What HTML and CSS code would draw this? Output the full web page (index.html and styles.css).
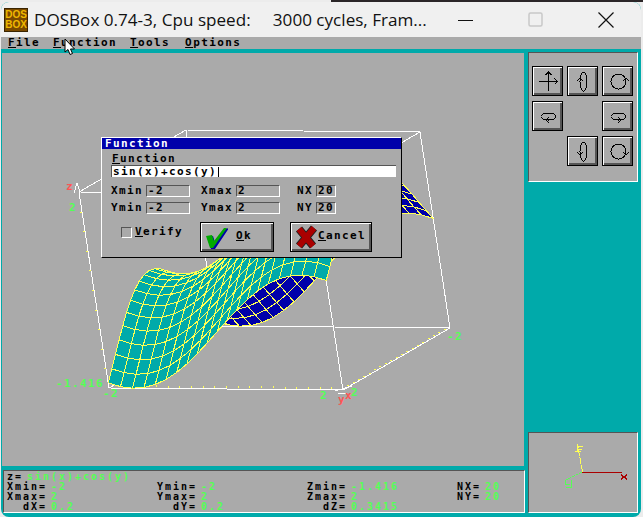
FILE: index.html
```html
<!DOCTYPE html>
<html>
<head>
    <title>DOSBox 0.74-3</title>
    <link rel="stylesheet" href="styles.css">
</head>
<body>
    <div class="window">
        <div class="titlebar">
            <div class="app-icon">DOS<br>BOX</div>
            <div class="title-text">DOSBox 0.74-3, Cpu speed:     3000 cycles, Fram...</div>
            <div class="win-controls">
                <svg class="win-btn" width="16" height="16" viewBox="0 0 16 16"><path d="M0 8.5H15" stroke="#111" fill="none"/></svg>
                <svg class="win-btn" width="16" height="16" viewBox="0 0 16 16"><rect x="1" y="1" width="13" height="13" rx="1.5" stroke="#c8c8c8" stroke-width="1.5" fill="none"/></svg>
                <svg class="win-btn" width="16" height="16" viewBox="0 0 16 16"><path d="M0.5 0.5L15.5 15.5M15.5 0.5L0.5 15.5" stroke="#111" stroke-width="1.2" fill="none"/></svg>
            </div>
        </div>
        <div class="menu">
            <span><u>F</u>ile</span>
            <span><u>F</u>unction</span>
            <span><u>T</u>ools</span>
            <span><u>O</u>ptions</span>
        </div>
        <div class="desktop">
            <div class="left-col">
                <div class="plot">
                    <svg id="plot-svg" class="plot-svg" width="522" height="413" viewBox="2 53 522 413">
                        <g id="plot-box"></g>
                        <g id="plot-surface"></g>
                        <g class="axis-label">
                            <text class="red" x="66" y="190">z</text>
                            <text class="green" x="69" y="211">2</text>
                            <text class="green" x="56" y="387">-1.416</text>
                            <text class="green" x="103" y="397">-2</text>
                            <text class="green" x="320" y="399">2</text>
                            <text class="green" x="351" y="396">2</text>
                            <text class="red" x="338" y="403">y</text>
                            <text class="red" x="345" y="399">x</text>
                            <text class="green" x="447" y="340">-2</text>
                        </g>
                    </svg>
                    <div class="dialog">
                        <div class="dialog-title">Function</div>
                        <div class="dialog-body">
                            <div class="fn-label"><u>F</u>unction</div>
                            <div class="fn-input">sin(x)+cos(y)<span class="caret"></span></div>
                            <div class="range-grid">
                                <span>Xmin</span><span class="field">-2</span><i></i>
                                <span>Xmax</span><span class="field">2</span><i></i>
                                <span>NX</span><span class="field">20</span>
                                <span>Ymin</span><span class="field">-2</span><i></i>
                                <span>Ymax</span><span class="field">2</span><i></i>
                                <span>NY</span><span class="field">20</span>
                            </div>
                            <div class="dialog-actions">
                                <div class="verify"><span class="checkbox"></span><span><u>V</u>erify</span></div>
                                <div class="dlg-btn ok-btn">
                                    <svg width="24" height="24" viewBox="0 0 24 24">
                                        <polygon points="3,12 9,11 11,17 21,4 25,3 11,24 7,24" fill="#0000aa"/>
                                        <polygon points="2,11 8,10 10,16 20,3 23,3 9,23 6,23" fill="#00aa00"/>
                                    </svg>
                                    <span class="btn-label"><u>O</u>k</span>
                                </div>
                                <div class="dlg-btn cancel-btn">
                                    <svg width="24" height="24" viewBox="0 0 24 24">
                                        <path d="M5 4L19 21M20 3L5 21" stroke="#222" stroke-width="8" fill="none"/>
                                        <path d="M5 4L19 21M20 3L5 21" stroke="#aa0000" stroke-width="6" fill="none"/>
                                    </svg>
                                    <span class="btn-label"><u>C</u>ancel</span>
                                </div>
                            </div>
                        </div>
                    </div>
                </div>
                <div class="status">
                    <div class="status-row"><span>z=</span><b>sin(x)+cos(y)</b></div>
                    <div class="status-grid">
                        <div>Xmin=<b>-2</b></div><div>Ymin=<b>-2</b></div><div>Zmin=<b>-1.416</b></div><div>NX=<b>20</b></div>
                        <div>Xmax=<b>2</b></div><div>Ymax=<b>2</b></div><div>Zmax=<b>2</b></div><div>NY=<b>20</b></div>
                        <div>  dX=<b>0.2</b></div><div>  dY=<b>0.2</b></div><div>  dZ=<b>0.3415</b></div><div></div>
                    </div>
                </div>
            </div>
            <div class="right-col">
                <div class="toolbar">
                    <div class="tool-btn"><svg width="24" height="24" viewBox="0 0 24 24"><path d="M2.5 12.5H21.5M18.5 9.5L21.5 12.5L18.5 15.5M12.5 3V22M9.5 6L12.5 3L15.5 6"/></svg></div>
                    <div class="tool-btn"><svg width="24" height="24" viewBox="0 0 24 24"><ellipse cx="12.5" cy="12.5" rx="3.5" ry="9.5"/><path d="M6 12L9 9L12 12"/></svg></div>
                    <div class="tool-btn"><svg width="24" height="24" viewBox="0 0 24 24"><circle cx="12.5" cy="12.5" r="7.5"/><path d="M17 12L20 9L23 12"/></svg></div>
                    <div class="tool-btn"><svg width="24" height="24" viewBox="0 0 24 24"><ellipse cx="12.5" cy="12.5" rx="7.5" ry="3.5"/><path d="M13 13L10 16L13 19"/></svg></div>
                    <div></div>
                    <div class="tool-btn"><svg width="24" height="24" viewBox="0 0 24 24"><ellipse cx="12.5" cy="12.5" rx="7.5" ry="3.5"/><path d="M12 13L15 16L12 19"/></svg></div>
                    <div></div>
                    <div class="tool-btn"><svg width="24" height="24" viewBox="0 0 24 24"><ellipse cx="12.5" cy="12.5" rx="3.5" ry="9.5"/><path d="M6 13L9 16L12 13"/></svg></div>
                    <div class="tool-btn"><svg width="24" height="24" viewBox="0 0 24 24"><circle cx="12.5" cy="12.5" r="7.5"/><path d="M17 13L20 16L23 13"/></svg></div>
                </div>
                <div class="viewer">
                    <svg class="viewer-svg" width="108" height="79" viewBox="529 433 108 79">
                        <path d="M582 472.5H622" stroke="#aa0000"/>
                        <path d="M582.5 472L578 447" stroke="#ffff55" stroke-dasharray="7 1"/>
                        <path d="M582 472L564 481" stroke="#55ff55" stroke-dasharray="3 1"/>
                        <path d="M621 475L627 479M627 475L621 479" stroke="#aa0000" stroke-width="1.5"/>
                        <path d="M577 444V452M577 446H583M577 449H582M575 451H581" stroke="#ffff55"/>
                        <path d="M565 480V484H570M571 480V487H566" stroke="#55ff55" fill="none"/>
                    </svg>
                </div>
            </div>
        </div>
    </div>
    <svg class="cursor" width="13" height="18" viewBox="0 0 13 18">
        <path d="M1 1V14L4 11.5L6 16.5L8.5 15.5L6.5 11H10.5Z" fill="#fff" stroke="#000"/>
    </svg>
    <script src="script.js"></script>
</body>
</html>
```

FILE: styles.css
```css
body {
    margin: 0;
    width: 643px;
    height: 517px;
    overflow: hidden;
    position: relative;
    background: linear-gradient(#2b2628, #2b2628) 331px 0 / 312px 2px no-repeat, #ececec;
    font-family: "DejaVu Sans Mono", "Liberation Mono", monospace;
    font-weight: bold;
    font-size: 11px;
    letter-spacing: 1.38px;
    color: #000;
}
u {
    text-underline-offset: 1px;
}
.window {
    margin: 2px 2px 0 1px;
    height: 515px;
    background: #00aaaa;
    border-radius: 8px 8px 8px 8px;
    overflow: hidden;
}
.titlebar {
    height: 35px;
    background: #f0f0f0;
    display: flex;
    align-items: center;
    font-family: "Open Sans", "Noto Sans", sans-serif;
    font-weight: normal;
    letter-spacing: 0;
}
.app-icon {
    width: 24px;
    height: 24px;
    margin-left: 3px;
    background: #7a4a00;
    color: #f0b800;
    font: bold 10px/10.5px "Liberation Sans", sans-serif;
    text-align: center;
    padding-top: 1px;
    box-sizing: border-box;
    border: 1px solid #3a2400;
}
.title-text {
    margin-left: 6px;
    font-size: 17.1px;
    white-space: pre;
    color: #111;
}
.win-controls {
    margin-left: auto;
    display: flex;
    gap: 54px;
    padding-right: 27px;
}
.win-btn {
    display: block;
}
.menu {
    height: 12px;
    background: #aaaaaa;
    display: flex;
    gap: 13px;
    padding-left: 7px;
    line-height: 12px;
}
.menu span:nth-child(4) {
    margin-left: 2px;
}
.desktop {
    display: flex;
    gap: 3px;
    padding: 3px 3px 0 1px;
}
.left-col {
    width: 523px;
}
.plot {
    width: 522px;
    height: 413px;
    margin-top: 1px;
    background: #aaaaaa;
    position: relative;
}
.plot-svg {
    display: block;
}
.axis-label text {
    font-family: "DejaVu Sans Mono", monospace;
    font-size: 11px;
}
.green {
    fill: #55ff55;
}
.red {
    fill: #ff5555;
}
.dialog {
    position: absolute;
    left: 99px;
    top: 84px;
    width: 301px;
    height: 121px;
    box-sizing: border-box;
    background: #aaaaaa;
    border: 1px solid #000;
    border-top-color: #fff;
    border-left-color: #fff;
}
.dialog-title {
    height: 11px;
    line-height: 11px;
    background: #0000aa;
    color: #fff;
    padding-left: 3px;
}
.dialog-body {
    padding: 5px 5px 0 9px;
}
.fn-label {
    height: 10px;
    line-height: 10px;
    margin-left: 1px;
}
.fn-input {
    height: 12px;
    line-height: 12px;
    background: #fff;
    box-sizing: border-box;
    border-top: 1px solid #555;
    border-left: 1px solid #555;
    padding-left: 1px;
    margin-top: 1px;
    white-space: pre;
    display: flex;
    align-items: center;
}
.caret {
    width: 1px;
    height: 10px;
    background: #000;
    margin-left: 1px;
}
.range-grid {
    display: grid;
    grid-template-columns: 35px 44px 11px 35px 44px 17px 19px 20px;
    grid-auto-rows: 12px;
    row-gap: 5px;
    margin-top: 8px;
    line-height: 12px;
}
.field {
    box-sizing: border-box;
    border: 1px solid #fff;
    border-top-color: #555;
    border-left-color: #555;
    line-height: 10px;
    padding-left: 1px;
}
.dialog-actions {
    display: flex;
    margin-top: 8px;
    margin-left: 10px;
}
.verify {
    display: flex;
    gap: 3px;
    width: 79px;
    height: 20px;
    padding-top: 5px;
    line-height: 10px;
}
.checkbox {
    width: 11px;
    height: 11px;
    box-sizing: border-box;
    border: 1px solid #fff;
    border-top-color: #555;
    border-left-color: #555;
}
.dlg-btn {
    height: 30px;
    box-sizing: border-box;
    border: 1px solid #000;
    box-shadow: inset 1px 1px 0 #fff, inset -2px -2px 0 #555;
    display: flex;
    align-items: center;
    padding-left: 3px;
}
.btn-label {
    padding-bottom: 3px;
}
.ok-btn {
    width: 74px;
    margin-right: 16px;
}
.cancel-btn {
    width: 82px;
}
.ok-btn .btn-label {
    margin-left: 8px;
}
.status {
    margin: 4px 0 0 1px;
    width: 522px;
    height: 43px;
    box-sizing: border-box;
    background: #aaaaaa;
    border: 1px solid #fff;
    border-top-color: #555;
    border-left-color: #555;
    padding: 1px 0 0 3px;
    font-size: 10px;
    letter-spacing: 1.98px;
    line-height: 10px;
}
.status b {
    color: #55ff55;
    margin-left: 4px;
}
.status-row {
    display: flex;
    height: 10px;
}
.status-grid {
    display: grid;
    grid-template-columns: repeat(4, 150px);
    grid-auto-rows: 10px;
    white-space: pre;
}
.right-col {
    width: 110px;
    display: flex;
    flex-direction: column;
    justify-content: space-between;
    height: 461px;
}
.toolbar {
    height: 130px;
    box-sizing: border-box;
    background: #aaaaaa;
    border: 1px solid #fff;
    border-top-color: #555;
    border-left-color: #555;
    padding: 13px 0 0 3px;
    display: grid;
    grid-template-columns: repeat(3, 31px);
    grid-auto-rows: 30px;
    column-gap: 4px;
    row-gap: 5px;
}
.tool-btn {
    box-sizing: border-box;
    border: 1px solid #000;
    box-shadow: inset 1px 1px 0 #fff, inset -2px -2px 0 #555;
    display: flex;
    align-items: center;
    justify-content: center;
}
.tool-btn svg {
    fill: none;
    stroke: #000;
    shape-rendering: crispEdges;
}
.viewer {
    height: 81px;
    box-sizing: border-box;
    background: #aaaaaa;
    border: 1px solid #fff;
    border-top-color: #555;
    border-left-color: #555;
}
.viewer-svg {
    display: block;
    shape-rendering: crispEdges;
}
.cursor {
    position: absolute;
    left: 64px;
    top: 38px;
}
```

FILE: script.js
```js
// z = sin(x) + cos(y) on [-2,2], same projection as the program draws
const NS = 'http://www.w3.org/2000/svg';
const N = 20;
const ZMIN = -1.416;
const ZMAX = 2;

function project(u, v, h) {
    return [
        109 + u * 234 + v * 107 - h * 30,
        388 + u * 2 - v * 62 - h * 196
    ];
}

function surfacePoint(i, j) {
    const x = -2 + 4 * i / N;
    const y = 2 - 4 * j / N;
    const z = Math.sin(x) + Math.cos(y);
    return project(i / N, j / N, (z - ZMIN) / (ZMAX - ZMIN));
}

function add(parent, name, attrs) {
    const el = document.createElementNS(NS, name);
    for (const key in attrs) {
        el.setAttribute(key, attrs[key]);
    }
    parent.appendChild(el);
    return el;
}

function line(parent, a, b, color) {
    add(parent, 'line', {
        x1: a[0], y1: a[1], x2: b[0], y2: b[1],
        stroke: color, 'shape-rendering': 'crispEdges'
    });
}

function drawBox() {
    const box = document.getElementById('plot-box');
    const c = (u, v, h) => project(u, v, h);
    const edges = [
        [c(0,0,0), c(1,0,0)], [c(1,0,0), c(1,1,0)], [c(1,1,0), c(0,1,0)], [c(0,1,0), c(0,0,0)],
        [c(0,0,1), c(1,0,1)], [c(1,0,1), c(1,1,1)], [c(1,1,1), c(0,1,1)], [c(0,1,1), c(0,0,1)],
        [c(0,0,0), c(0,0,1)], [c(1,0,0), c(1,0,1)], [c(1,1,0), c(1,1,1)], [c(0,1,0), c(0,1,1)]
    ];
    edges.forEach(e => line(box, e[0], e[1], '#ffffff'));

    // small arrow heads at the axis ends
    line(box, [77, 183], [74, 193], '#ffffff');
    line(box, [77, 183], [80, 192], '#ffffff');
    line(box, [335, 391], [352, 386], '#ffffff');
    line(box, [338, 393], [346, 393], '#ffffff');

    // yellow ticks, just off the white lines
    for (let i = 1; i < N; i++) {
        const p = c(i / N, 0, 0);
        add(box, 'rect', { x: Math.round(p[0]), y: Math.round(p[1]) - 3, width: 1, height: 2, fill: '#ffff55' });
        const q = c(1, i / N, 0);
        add(box, 'rect', { x: Math.round(q[0]) - 1, y: Math.round(q[1]) - 2, width: 2, height: 1, fill: '#ffff55' });
    }
    for (let i = 1; i < 10; i++) {
        const p = c(0, 0, i / 10);
        add(box, 'rect', { x: Math.round(p[0]) - 2, y: Math.round(p[1]), width: 2, height: 1, fill: '#ffff55' });
    }
}

function drawSurface() {
    const group = document.getElementById('plot-surface');
    // back rows first so the near ones cover them
    for (let j = N - 1; j >= 0; j--) {
        for (let i = 0; i < N; i++) {
            const a = surfacePoint(i, j);
            const b = surfacePoint(i + 1, j);
            const c = surfacePoint(i + 1, j + 1);
            const d = surfacePoint(i, j + 1);
            const area = (b[0] - a[0]) * (d[1] - a[1]) - (b[1] - a[1]) * (d[0] - a[0]);
            add(group, 'polygon', {
                points: [a, b, c, d].map(p => p.join(',')).join(' '),
                fill: area < 0 ? '#00aaaa' : '#0000aa',
                stroke: '#ffff55',
                'shape-rendering': 'crispEdges'
            });
        }
    }
}

drawBox();
drawSurface();
```
